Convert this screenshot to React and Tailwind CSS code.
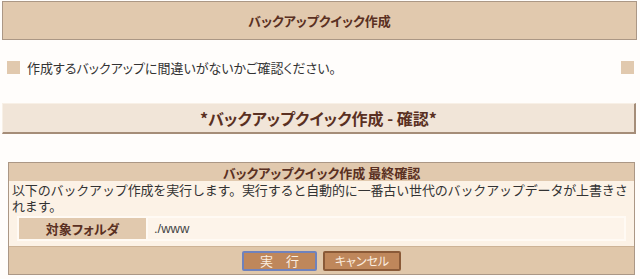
import React from "react";

export default function App() {
  const font = "font-['Noto_Sans_CJK_JP','Noto_Sans',sans-serif]";
  return (
    <div className={`w-[640px] h-[279px] bg-[#fffdfb] overflow-hidden ${font}`}>
      <div className="pt-[1px] px-[2px] pr-[3px] [font-feature-settings:'palt']">
        <div className="h-[39px] border border-[#ab9785] bg-[#e1c9ae] flex items-center justify-center">
          <span className="text-[13px] font-bold text-[#5a3022] leading-none">バックアップクイック作成</span>
        </div>
      </div>

      <div className="mt-[20px] flex items-center justify-between pl-[7px] pr-[6px] h-[14px] [font-feature-settings:'palt']">
        <div className="flex items-center gap-[7px]">
          <div className="w-[13px] h-[13px] bg-[#e1c9ae]" />
          <span className="text-[13px] leading-none text-[#333]">作成するバックアップに間違いがないかご確認ください。</span>
        </div>
        <div className="w-[13px] h-[13px] bg-[#e1c9ae]" />
      </div>

      <div className="mt-[29px] pl-[2px] pr-[4px] [font-feature-settings:'palt']">
        <div className="h-[31px] bg-[#f1e5d8] border-t border-l border-t-[#f8f0e6] border-l-[#f8f0e6] border-b-2 border-r-2 border-b-[#a58d78] border-r-[#a58d78] flex items-center justify-center">
          <span className="text-[16px] font-bold text-[#5a3022] leading-none">*バックアップクイック作成 - 確認*</span>
        </div>
      </div>

      <div className="mt-[28px] ml-[8px] w-[627px] border border-[#ab9785] bg-[#fcf2e6]">
        <div className="h-[18px] bg-[#e1c9ae] flex items-center justify-center [font-feature-settings:'palt']">
          <span className="text-[13px] font-bold text-[#5a3022] leading-none">バックアップクイック作成 最終確認</span>
        </div>
        <div className="pl-[3px] pt-[1px] text-[13px] leading-[16px] tracking-[-0.15px] text-[#333]">
          以下のバックアップ作成を実行します。実行すると自動的に一番古い世代のバックアップデータが上書きさ<br />れます。
        </div>
        <div className="mx-[8px] mt-[2px] p-[2px] bg-[#fffaf4] flex gap-[2px] [font-feature-settings:'palt']">
          <div className="w-[127px] h-[21px] bg-[#e1c9ae] flex items-center justify-center">
            <span className="text-[13px] font-bold text-[#5a3022] leading-none">対象フォルダ</span>
          </div>
          <div className="flex-1 h-[21px] bg-[#fdf4ea] flex items-center pl-[6px]">
            <span className="text-[13px] text-[#444] leading-none font-['Liberation_Sans',sans-serif]">./www</span>
          </div>
        </div>
        <div className="mt-[5px] h-[28px] bg-[#e0c7aa] border-t border-[#cdb396] flex items-center justify-center gap-[6px] [font-feature-settings:'palt']">
          <button className="w-[75px] h-[20px] bg-[#bf875b] border-2 border-[#6f82bd] rounded-[2px] text-[13px] text-[#fbeee0] leading-none tracking-[1em] pl-[1em]">実行</button>
          <button className="w-[78px] h-[20px] bg-[#bf875b] border-2 border-[#8a5a38] rounded-[2px] text-[12px] text-[#fbeee0] leading-none">キャンセル</button>
        </div>
      </div>
    </div>
  );
}
